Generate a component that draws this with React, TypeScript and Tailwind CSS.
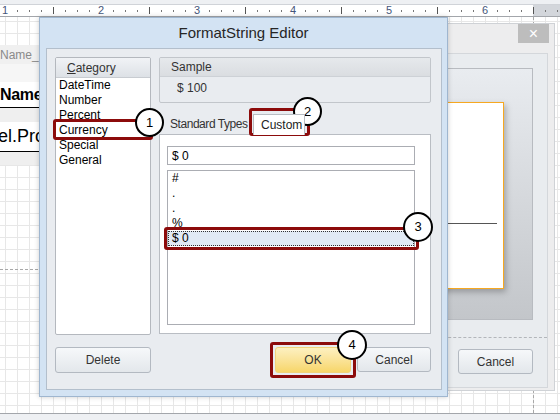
import React from "react";

const ticks = Array.from({ length: 47 }, (_, i) => i);
const categories = ["DateTime", "Number", "Percent", "Currency", "Special", "General"];
const formats = ["#", ".", ".", "%", "$ 0"];

function Ruler() {
  return (
    <div className="h-[17px] shrink-0 border-b border-[#a3a6ab] bg-[#eef0f3]">
      <svg width="560" height="16" className="block">
        <rect x="0" y="4" width="533" height="12" fill="#ffffff" />
        <rect x="533" y="4" width="27" height="12" fill="#d3d6db" />
        <rect x="0" y="4" width="560" height="1" fill="#d0d3d8" />
        {ticks.map((i) => {
          const x = 5 + i * 12;
          if (i % 8 === 0)
            return (
              <text key={i} x={x} y="14" fontSize="11" textAnchor="middle" fill="#46567a" fontFamily="Liberation Sans, Arial, sans-serif">
                {i / 8 + 1}
              </text>
            );
          if (i % 4 === 0) return <rect key={i} x={x} y="7" width="1" height="7" fill="#555" />;
          return <rect key={i} x={x} y="10" width="1" height="2" fill="#777" />;
        })}
      </svg>
    </div>
  );
}

function Btn({ label, className }: { label: string; className: string }) {
  return (
    <div
      className={`flex items-center justify-center rounded-[3px] border border-[#b3b9c1] bg-gradient-to-b from-[#f6f8fa] to-[#e3e7eb] text-[12px] text-[#333] ${className}`}
    >
      {label}
    </div>
  );
}

export default function App() {
  return (
    <div className="relative flex h-[420px] w-[560px] flex-col overflow-hidden bg-white font-['Liberation_Sans',Arial,sans-serif]">
      <Ruler />

      {/* report canvas */}
      <div className="relative flex flex-1 flex-col bg-white bg-[linear-gradient(to_right,#e7e7e7_1px,transparent_1px),linear-gradient(to_bottom,#e7e7e7_1px,transparent_1px)] bg-[size:12px_12px] bg-[position:5px_4px]">
        <div className="h-[28px]" />
        <div className="flex h-[19px] w-[533px] items-center bg-[#f0f0f0] text-[12px] text-[#8a8a8a]">
          <div className="w-[39px] overflow-hidden whitespace-nowrap pl-0">Name_L</div>
        </div>
        <div className="h-[18px] w-[533px] bg-[#f6f6f6]" />
        <div className="flex h-[26px] w-[533px] items-center border-b border-black bg-white text-[16px] font-bold tracking-[-0.3px] text-black">
          <div className="w-[39px] overflow-hidden whitespace-nowrap">Name</div>
        </div>
        <div className="h-[14px] w-[533px] bg-[#efefef]" />
        <div className="flex h-[30px] w-[533px] items-center border-b border-black bg-white text-[18px] text-black">
          <div className="w-[39px] overflow-hidden whitespace-nowrap">
            <span className="ml-[-2px]">el.Pro</span>
          </div>
        </div>
        <div className="h-[13px] w-[533px] bg-[#efefef]" />
        <div className="h-[104px]" />
        <div className="w-[533px] border-t border-dashed border-[#a8a8a8]" />
        <div className="absolute left-[533px] top-0 h-full border-l border-dashed border-[#a8a8a8]" />
      </div>

      <div className="h-[7px] shrink-0 border-t border-[#a3a6ab] bg-[#eef0f3]" />

      {/* window behind the dialog */}
      <div className="absolute left-[300px] top-[23px] flex h-[368px] w-[255px] flex-col border border-[#cfd2d6] bg-[#ededee]">
        <div className="flex h-[29px] justify-end pr-[5px]">
          <div className="flex h-[19px] w-[31px] items-center justify-center bg-[#bdbdbd] text-[16px] leading-none text-white">×</div>
        </div>
        <div className="mb-[1px] mr-[6px] flex h-[335px] flex-col border border-[#d4d7db] bg-[#e9ecef] pr-[14px] pt-[14px]">
          <div className="flex h-[252px] justify-end border border-[#b8bbc0] bg-gradient-to-b from-[#e9ecf0] via-[#d6d9dd] to-[#c3c6ca] pr-[28px] pt-[33px]">
            <div className="flex h-[187px] w-[180px] shrink-0 flex-col border border-[#f6a821] bg-white pt-[120px] shadow-[2px_3px_6px_rgba(0,0,0,0.25)]">
              <div className="mr-[6px] border-t border-[#555]" />
            </div>
          </div>
          <div className="-mr-[14px] mt-[17px] border-t border-dashed border-[#b3b6ba]" />
          <div className="mt-[11px] flex justify-end">
            <Btn label="Cancel" className="h-[25px] w-[75px]" />
          </div>
        </div>
      </div>

      {/* FormatString Editor dialog */}
      <div className="absolute left-[39px] top-[17px] flex h-[380px] w-[409px] flex-col border border-[#9fb6cf] bg-[#d3e3f3] shadow-[0_0_5px_rgba(0,0,0,0.2)]">
        <div className="flex h-[30px] shrink-0 items-center justify-center text-[15px] text-[#262626]">FormatString Editor</div>
        <div className="mb-[6px] ml-[6px] mr-[5px] flex flex-1 flex-col border border-[#b3bfcc] bg-[#e9ecf0] pl-[8px] pr-[10px] pt-[8px]">
          <div className="flex h-[278px] gap-[8px]">
            {/* category */}
            <div className="flex w-[96px] flex-col overflow-hidden rounded-[2px] border border-[#b4b8be] bg-white">
              <div className="flex h-[20px] shrink-0 items-center border-b border-[#c8ccd1] bg-gradient-to-b from-[#f1f3f6] to-[#dde1e6] pl-[11px] text-[12px] text-[#333]">
                <span>
                  <span className="underline">C</span>ategory
                </span>
              </div>
              <div className="flex flex-col pl-[3px]">
                {categories.map((c) => (
                  <div key={c} className="h-[15px] text-[12px] leading-[15px] text-black">
                    {c}
                  </div>
                ))}
              </div>
            </div>

            {/* right column */}
            <div className="flex w-[272px] flex-col">
              <div className="flex h-[46px] flex-col overflow-hidden rounded-[2px] border border-[#c2c6cb] bg-[#e9ecf0]">
                <div className="flex h-[19px] shrink-0 items-center border-b border-[#cdd1d6] bg-gradient-to-b from-[#e6e9ec] to-[#dadde1] pl-[11px] text-[12px] text-[#333]">
                  Sample
                </div>
                <div className="pl-[17px] pt-[4px] text-[12px] leading-[15px] text-[#333]">$ 100</div>
              </div>

              <div className="mt-[10px] flex h-[21px] items-end">
                <div className="ml-[7px] flex h-[21px] w-[82px] items-center whitespace-nowrap pl-[4px] text-[12px] tracking-[-0.45px] text-[#333]">Standard Types</div>
                <div className="relative z-10 -mb-px ml-[5px] flex h-[21px] w-[52px] items-center border border-b-0 border-[#b9bdc3] bg-white pl-[7px] text-[12px] text-[#222]">
                  Custom
                </div>
              </div>

              <div className="flex h-[200px] flex-col border border-[#b9bdc3] bg-white pl-[7px] pt-[11px]">
                <div className="flex h-[19px] w-[248px] items-center border border-[#abadb3] pl-[4px] text-[12px] text-black">$ 0</div>
                <div className="mt-[5px] flex h-[155px] w-[248px] flex-col border border-[#abadb3]">
                  {formats.map((f, i) => (
                    <div
                      key={i}
                      className={
                        i === 4
                          ? "h-[15px] border border-dotted border-[#333] bg-[#e1eaf5] pl-[3px] text-[12px] leading-[13px] text-black"
                          : "h-[15px] pl-[4px] text-[12px] leading-[15px] text-black"
                      }
                    >
                      {f}
                    </div>
                  ))}
                </div>
              </div>
            </div>
          </div>

          <div className="mt-[12px] flex h-[26px] items-center">
            <Btn label="Delete" className="h-[26px] w-[96px]" />
            <div className="ml-auto flex gap-[6px]">
              <div className="flex h-[26px] w-[76px] items-center justify-center rounded-[3px] border border-[#f2d37a] bg-gradient-to-b from-[#fdf0c0] to-[#f7d669] text-[12px] text-[#333]">
                OK
              </div>
              <Btn label="Cancel" className="h-[25px] w-[74px]" />
            </div>
          </div>
        </div>
      </div>

      {/* annotations */}
      <div className="absolute left-[53px] top-[119px] h-[21px] w-[100px] rounded-[3px] border-[3px] border-[#8c0b0b]" />
      <div className="absolute left-[249px] top-[108px] h-[28px] w-[61px] rounded-[3px] border-[3px] border-[#8c0b0b]" />
      <div className="absolute left-[164px] top-[227px] h-[23px] w-[255px] rounded-[3px] border-[3px] border-[#8c0b0b]" />
      <div className="absolute left-[270px] top-[342px] h-[36px] w-[86px] rounded-[3px] border-[3px] border-[#8c0b0b]" />

      <div className="absolute left-[135px] top-[108px] flex h-[29px] w-[29px] items-center justify-center rounded-full border-2 border-black bg-white text-[13px] text-black">1</div>
      <div className="absolute left-[293px] top-[97px] flex h-[29px] w-[29px] items-center justify-center rounded-full border-2 border-black bg-white text-[13px] text-black">2</div>
      <div className="absolute left-[403px] top-[212px] flex h-[30px] w-[30px] items-center justify-center rounded-full border-2 border-black bg-white text-[13px] text-black">3</div>
      <div className="absolute left-[337px] top-[330px] flex h-[30px] w-[30px] items-center justify-center rounded-full border-2 border-black bg-white text-[13px] text-black">4</div>
    </div>
  );
}
